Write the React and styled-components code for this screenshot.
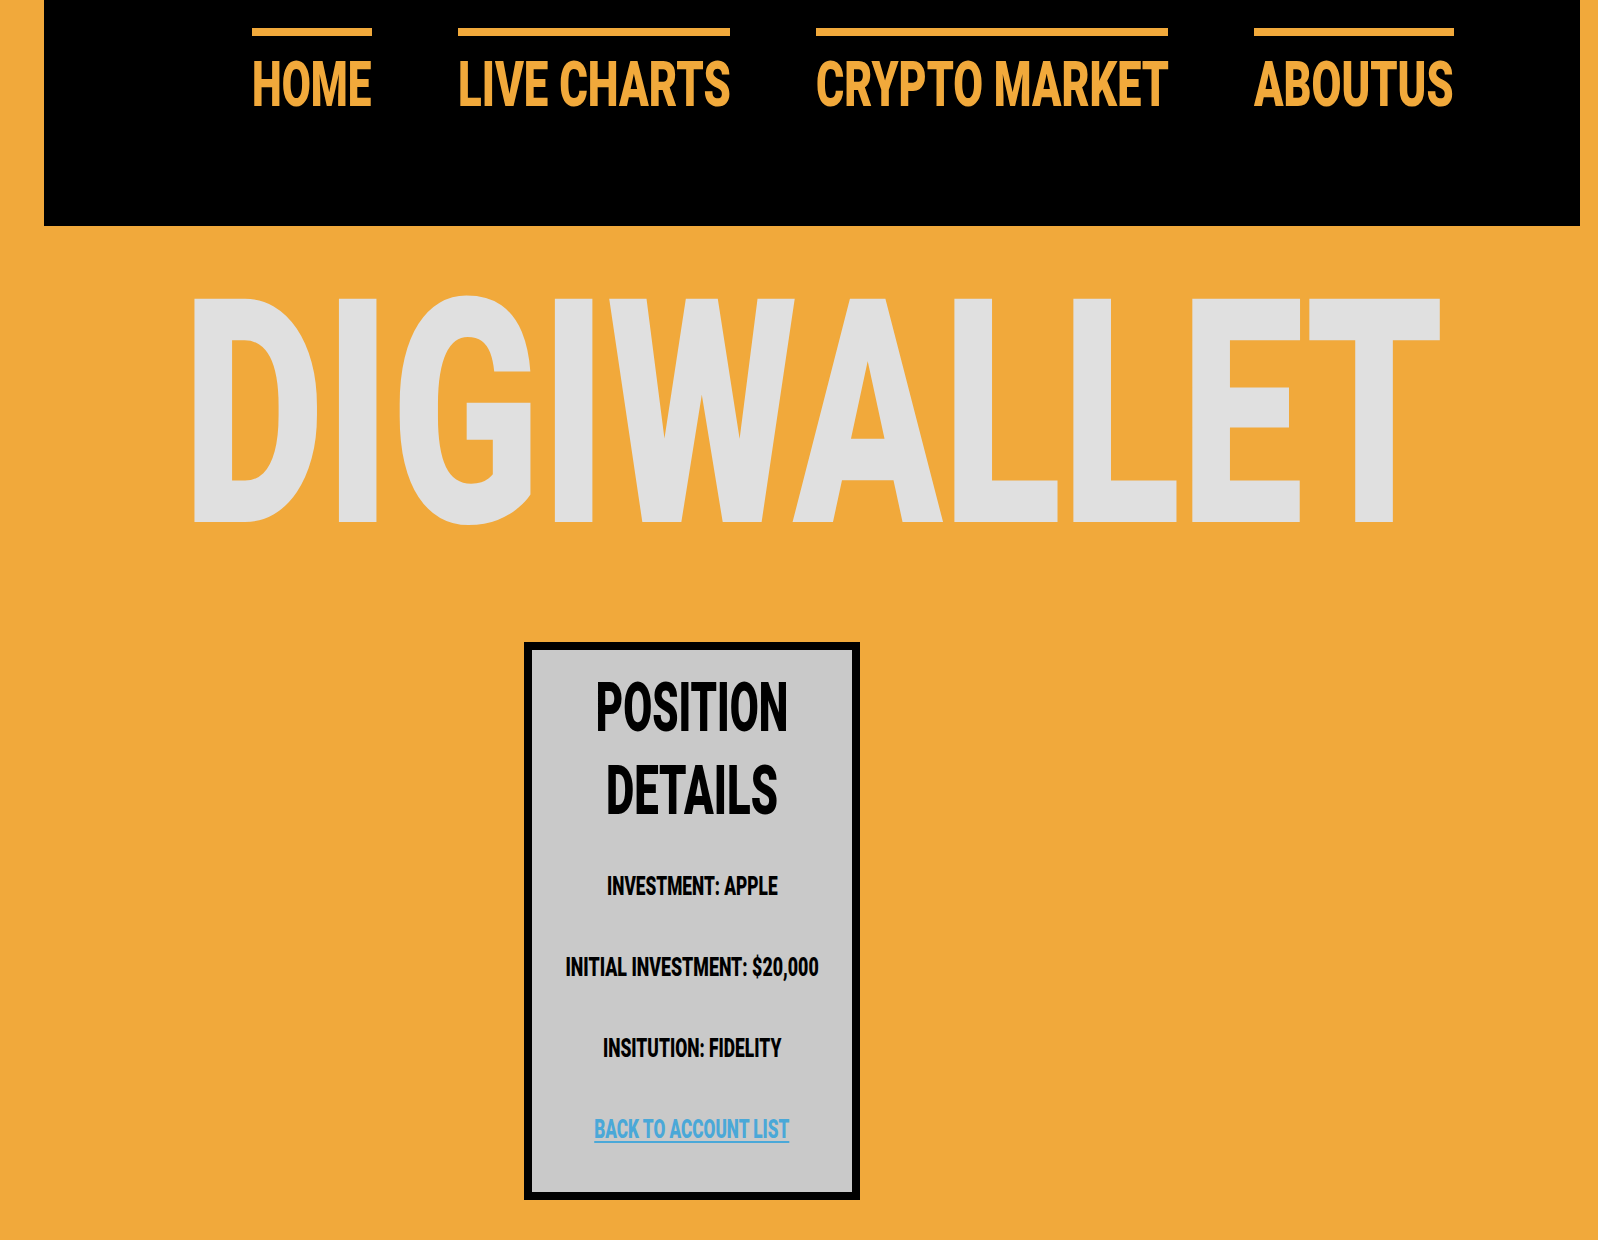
import React from "react";
import styled, { createGlobalStyle } from "styled-components";

const GlobalStyle = createGlobalStyle`
  html, body {
    margin: 0;
    padding: 0;
    background: #f1a93b;
  }
  body {
    font-family: Roboto, "Liberation Sans", sans-serif;
  }
`;

const Page = styled.div`
  width: 1598px;
  min-height: 1240px;
  background: #f1a93b;
  overflow: hidden;
`;

// condensed look: the installed fonts are all wide, so squeeze the glyphs
const Squeeze = styled.span`
  display: inline-block;
  white-space: nowrap;
  transform: scaleX(${(p) => p.$scale || 0.66});
  transform-origin: ${(p) => p.$origin || "center"};
`;

const Header = styled.header`
  margin-left: 44px;
  width: 1536px;
  height: 226px;
  background: #000;
  box-sizing: border-box;
  padding: 28px 126px 0 0;
`;

const Nav = styled.nav`
  display: flex;
  justify-content: flex-end;
  gap: 86px;
`;

const NavLink = styled.a`
  display: block;
  flex: none;
  width: ${(p) => p.$w}px;
  border-top: 8px solid #f1a93b;
  padding-top: 17px;
  color: #f1a93b;
  font-size: 63px;
  font-weight: 900;
  line-height: 1;
  text-decoration: none;
  text-transform: uppercase;
`;

const Title = styled.h1`
  display: flex;
  justify-content: center;
  margin: 32px 0 0;
  padding-left: 28px;
  color: #e0e0e0;
  font-size: 314px;
  font-weight: 900;
  line-height: 1;
`;

const Section = styled.section`
  padding: 70px 0 40px 524px;
`;

const Card = styled.div`
  box-sizing: border-box;
  width: 336px;
  height: 558px;
  border: 8px solid #000;
  background: #c9c9c9;
  display: flex;
  flex-direction: column;
  align-items: center;
  padding-top: 16px;
`;

const CardTitle = styled.h2`
  display: flex;
  flex-direction: column;
  align-items: center;
  margin: 0 0 41px;
  font-size: 69px;
  font-weight: 900;
  line-height: 83px;
  color: #000;
  text-transform: uppercase;
`;

const Detail = styled.p`
  margin: 0 0 55px;
  font-size: 26px;
  font-weight: 900;
  line-height: 26px;
  color: #000;
  text-transform: uppercase;
`;

const BackLink = styled.a`
  font-size: 26px;
  font-weight: 900;
  line-height: 26px;
  color: #4aa8d8;
  text-transform: uppercase;

  ${Squeeze} {
    text-decoration: underline;
    text-decoration-thickness: 2px;
    text-underline-offset: 3px;
  }
`;

const links = [
  { label: "Home", w: 120, s: 0.67 },
  { label: "Live Charts", w: 272, s: 0.694 },
  { label: "Crypto Market", w: 352, s: 0.685 },
  { label: "AboutUs", w: 200, s: 0.688 },
];

const details = [
  { text: "Investment: Apple", s: 0.664 },
  { text: "Initial Investment: $20,000", s: 0.684 },
  { text: "Insitution: Fidelity", s: 0.67 },
];

export default function App() {
  return (
    <Page>
      <GlobalStyle />
      <Header>
        <Nav>
          {links.map((l) => (
            <NavLink key={l.label} href="#" $w={l.w}>
              <Squeeze $origin="left" $scale={l.s}>{l.label}</Squeeze>
            </NavLink>
          ))}
        </Nav>
      </Header>
      <Title>
        <Squeeze $scale={0.699}>DIGIWALLET</Squeeze>
      </Title>
      <Section>
        <Card>
          <CardTitle>
            <Squeeze $scale={0.609}>Position</Squeeze>
            <Squeeze $scale={0.633}>Details</Squeeze>
          </CardTitle>
          {details.map((d) => (
            <Detail key={d.text}>
              <Squeeze $scale={d.s}>{d.text}</Squeeze>
            </Detail>
          ))}
          <BackLink href="#">
            <Squeeze $scale={0.66}>Back to Account List</Squeeze>
          </BackLink>
        </Card>
      </Section>
    </Page>
  );
}
